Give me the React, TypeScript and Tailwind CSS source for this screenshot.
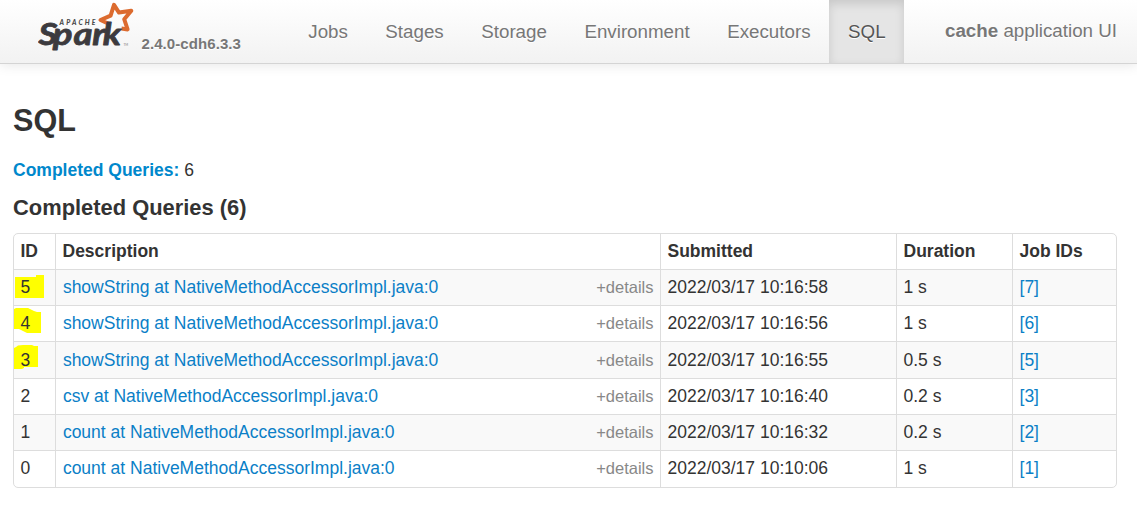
type Query = {
  id: number;
  description: string;
  submitted: string;
  duration: string;
  job: number;
  mark?: string;
  height: string;
};

const queries: Query[] = [
  { id: 5, description: "showString at NativeMethodAccessorImpl.java:0", submitted: "2022/03/17 10:16:58", duration: "1 s", job: 7, height: "h-[36px]", mark: "M1 7H22V5H30V28H1Z" },
  { id: 4, description: "showString at NativeMethodAccessorImpl.java:0", submitted: "2022/03/17 10:16:56", duration: "1 s", job: 6, height: "h-[36px]", mark: "M0 3L2 2H14L20 5L23 6H27V27H13L7 24L5 23H0Z" },
  { id: 3, description: "showString at NativeMethodAccessorImpl.java:0", submitted: "2022/03/17 10:16:55", duration: "0.5 s", job: 5, height: "h-[37px]", mark: "M0 6L2 5L4 3.5L9 3H18L20 4H24V25H10V26L8 27H0Z" },
  { id: 2, description: "csv at NativeMethodAccessorImpl.java:0", submitted: "2022/03/17 10:16:40", duration: "0.2 s", job: 3, height: "h-[36px]" },
  { id: 1, description: "count at NativeMethodAccessorImpl.java:0", submitted: "2022/03/17 10:16:32", duration: "0.2 s", job: 2, height: "h-[36px]" },
  { id: 0, description: "count at NativeMethodAccessorImpl.java:0", submitted: "2022/03/17 10:10:06", duration: "1 s", job: 1, height: "h-[37px] [&>td]:pb-[1.5px]!" },
];

const tabs = ["Jobs", "Stages", "Storage", "Environment", "Executors", "SQL"];

function SparkLogo() {
  return (
    <svg width="96" height="54" viewBox="38 0 96 54" className="shrink-0 [text-shadow:none]">
      <path
        d="M108 23.5L100.5 20L110.6 15.6L114 4.8L119 12.6L131.3 10.7L124.2 19.2L127.6 29.4L121.5 28.5"
        fill="none"
        stroke="#dc6b2f"
        strokeWidth="4"
        strokeLinejoin="round"
      />
      <text x="59.5" y="24.8" textLength="36" fontFamily="Lato, sans-serif" fontSize="6.8" fontWeight="900" fontStyle="italic" fill="#4a4a4a">
        APACHE
      </text>
      <text
        transform="scale(1.2 1)"
        x="32 44 61.2 76.8 85.6"
        y="44.6"
        fontFamily="Lato, sans-serif"
        fontSize="30.5"
        fontWeight="700"
        fontStyle="italic"
        fill="#3c3a3e"
        stroke="#3c3a3e"
        strokeWidth="0.8"
        strokeLinejoin="round"
      >
        Spark
      </text>
      <text x="123.5" y="45.5" fontFamily="Lato, sans-serif" fontSize="3" fill="#777">
        TM
      </text>
    </svg>
  );
}

function Navbar() {
  return (
    <header className="flex h-16 border-b border-[#d4d4d4] bg-linear-to-b from-white to-[#f2f2f2] pl-[38px] text-[18.75px] leading-[25px] text-[#777] shadow-[0_1px_12px_rgba(0,0,0,0.1)] [text-shadow:0_1px_0_#fff]">
      <div className="flex w-[251.5px] items-start">
        <SparkLogo />
        <span className="ml-[7.5px] pt-[31px] text-[15px] font-bold tracking-[0.08px] whitespace-nowrap">2.4.0-cdh6.3.3</span>
      </div>
      <nav className="flex">
        {tabs.map((tab) => (
          <a
            key={tab}
            className={
              tab === "SQL"
                ? "h-[63px] bg-[#e5e5e5] px-[18.75px] pt-[19px] text-[#555] shadow-[inset_0_4px_10px_rgba(0,0,0,0.125)]"
                : "h-[63px] px-[18.75px] pt-[19px]"
            }
          >
            {tab}
          </a>
        ))}
      </nav>
      <p className="ml-auto pt-[18px] pr-5 whitespace-nowrap">
        <strong>cache</strong> application UI
      </p>
    </header>
  );
}

export default function App() {
  return (
    <div className="h-[515px] w-[1137px] overflow-hidden bg-white font-['Liberation_Sans',Arial,sans-serif] text-[17.5px] leading-[25px] text-[#333]">
      <Navbar />
      <main className="pr-5 pl-[13px]">
        <h3 className="pt-[31px] text-[30.6px] leading-[50px] font-bold">SQL</h3>
        <p className="mt-[13px]">
          <a className="font-bold text-[#0088cc]">Completed Queries:</a> 6
        </p>
        <h4 className="mt-[12px] text-[21.9px] leading-[25px] font-bold">Completed Queries (6)</h4>
        <div className="mt-[13px] h-[255px] overflow-hidden rounded-[5px] border border-[#ddd]">
          <table className="w-full table-fixed border-separate border-spacing-0 text-left [&_td]:border-t [&_td]:border-[#ddd] [&_td]:p-0 [&_td]:pl-[6.5px] [&_td+td]:border-l [&_th]:p-0 [&_th]:pl-[6.5px] [&_th+th]:border-l [&_th+th]:border-[#ddd]">
            <colgroup>
              <col className="w-[41px]" />
              <col className="w-[605px]" />
              <col className="w-[236px]" />
              <col className="w-[116px]" />
              <col />
            </colgroup>
            <thead>
              <tr className="h-[35px]">
                <th>ID</th>
                <th>Description</th>
                <th>Submitted</th>
                <th>Duration</th>
                <th>Job IDs</th>
              </tr>
            </thead>
            <tbody>
              {queries.map((q) => (
                <tr key={q.id} className={`${q.height} odd:bg-[#f9f9f9]`}>
                  <td className="relative">
                    {q.mark && (
                      <svg className="absolute top-0 left-0" width="34" height="30" viewBox="0 0 34 30">
                        <path d={q.mark} fill="#ffff00" />
                      </svg>
                    )}
                    <span className="relative">{q.id}</span>
                  </td>
                  <td>
                    <div className="flex justify-between pr-[6.5px] pl-[0.4px]">
                      <a className="text-[#0b7fc7]">{q.description}</a>
                      <span className="text-[16.5px] text-[#888]">+details</span>
                    </div>
                  </td>
                  <td>{q.submitted}</td>
                  <td>{q.duration}</td>
                  <td>
                    <a className="text-[#0b7fc7]">[{q.job}]</a>
                  </td>
                </tr>
              ))}
            </tbody>
          </table>
        </div>
      </main>
    </div>
  );
}
